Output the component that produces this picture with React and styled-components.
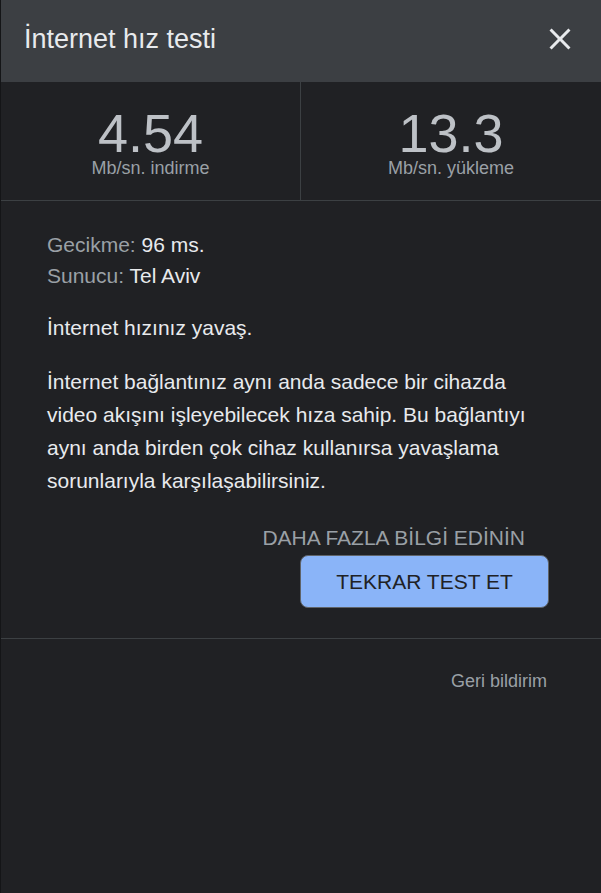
import React from "react";
import styled, { createGlobalStyle } from "styled-components";

const Global = createGlobalStyle`
  html, body { margin: 0; padding: 0; background: #202124; }
  body { font-family: "Liberation Sans", Arial, sans-serif; }
  * { box-sizing: border-box; }
`;

const Panel = styled.div`
  width: 601px;
  min-height: 893px;
  background: #202124;
  border-left: 1px solid #141517;
  display: flex;
  flex-direction: column;
`;

const Header = styled.header`
  height: 82px;
  background: #3c3f43;
  display: flex;
  align-items: center;
  justify-content: space-between;
  padding: 0 23px 4px 23px;
`;

const Title = styled.h1`
  margin: 0;
  font-weight: 400;
  font-size: 27px;
  line-height: 36px;
  color: #e8eaed;
`;

const CloseButton = styled.button`
  width: 36px;
  height: 36px;
  padding: 0;
  border: 0;
  background: none;
  display: flex;
  align-items: center;
  justify-content: center;
  cursor: pointer;
  svg { display: block; }
`;

const Stats = styled.div`
  display: grid;
  grid-template-columns: 1fr 1fr;
  border-bottom: 1px solid #3c4043;
`;

const Stat = styled.div`
  display: flex;
  flex-direction: column;
  align-items: center;
  padding: 25px 0 23px;
  border-right: ${(p) => (p.$divider ? "1px solid #3c4043" : "0")};
`;

const Value = styled.div`
  font-size: 54px;
  line-height: 52px;
  color: #bdc1c6;
`;

const Unit = styled.div`
  font-size: 18px;
  line-height: 18px;
  color: #9aa0a6;
`;

const Body = styled.section`
  padding: 28px 52px 30px 46px;
  border-bottom: 1px solid #3c4043;
  display: flex;
  flex-direction: column;
`;

const InfoLine = styled.div`
  font-size: 21px;
  line-height: 31px;
  color: #e8eaed;
`;

const Label = styled.span`
  color: #9aa0a6;
`;

const Text = styled.p`
  margin: ${(p) => p.$top}px 0 0;
  font-size: 21px;
  line-height: 33px;
  color: #e8eaed;
`;

const Actions = styled.div`
  margin-top: 29px;
  display: flex;
  flex-direction: column;
  align-items: flex-end;
  gap: 5px;
`;

const LinkButton = styled.a`
  margin-right: 24px;
  font-size: 21px;
  line-height: 24px;
  color: #9aa0a6;
  text-decoration: none;
  cursor: pointer;
`;

const PrimaryButton = styled.button`
  width: 249px;
  height: 53px;
  border: 1px solid #5f6368;
  border-radius: 8px;
  background: #8ab4f8;
  color: #202124;
  font-family: "Liberation Sans", Arial, sans-serif;
  font-size: 21px;
  cursor: pointer;
`;

const Footer = styled.footer`
  padding: 32px 54px 0 0;
  display: flex;
  justify-content: flex-end;
`;

const Feedback = styled.a`
  font-size: 18px;
  line-height: 20px;
  color: #9aa0a6;
  cursor: pointer;
`;

export default function App() {
  return (
    <>
      <Global />
      <Panel>
        <Header>
          <Title>İnternet hız testi</Title>
          <CloseButton aria-label="Kapat">
            <svg width="36" height="36" viewBox="0 0 24 24" fill="#e8eaed">
              <path d="M19 6.41L17.59 5 12 10.59 6.41 5 5 6.41 10.59 12 5 17.59 6.41 19 12 13.41 17.59 19 19 17.59 13.41 12z" />
            </svg>
          </CloseButton>
        </Header>
        <Stats>
          <Stat $divider>
            <Value>4.54</Value>
            <Unit>Mb/sn. indirme</Unit>
          </Stat>
          <Stat>
            <Value>13.3</Value>
            <Unit>Mb/sn. yükleme</Unit>
          </Stat>
        </Stats>
        <Body>
          <div>
            <InfoLine>
              <Label>Gecikme:</Label> 96 ms.
            </InfoLine>
            <InfoLine>
              <Label>Sunucu:</Label> Tel Aviv
            </InfoLine>
          </div>
          <Text $top={20}>İnternet hızınız yavaş.</Text>
          <Text $top={21}>
            İnternet bağlantınız aynı anda sadece bir cihazda video akışını
            işleyebilecek hıza sahip. Bu bağlantıyı aynı anda birden çok cihaz
            kullanırsa yavaşlama sorunlarıyla karşılaşabilirsiniz.
          </Text>
          <Actions>
            <LinkButton>DAHA FAZLA BİLGİ EDİNİN</LinkButton>
            <PrimaryButton>TEKRAR TEST ET</PrimaryButton>
          </Actions>
        </Body>
        <Footer>
          <Feedback>Geri bildirim</Feedback>
        </Footer>
      </Panel>
    </>
  );
}
